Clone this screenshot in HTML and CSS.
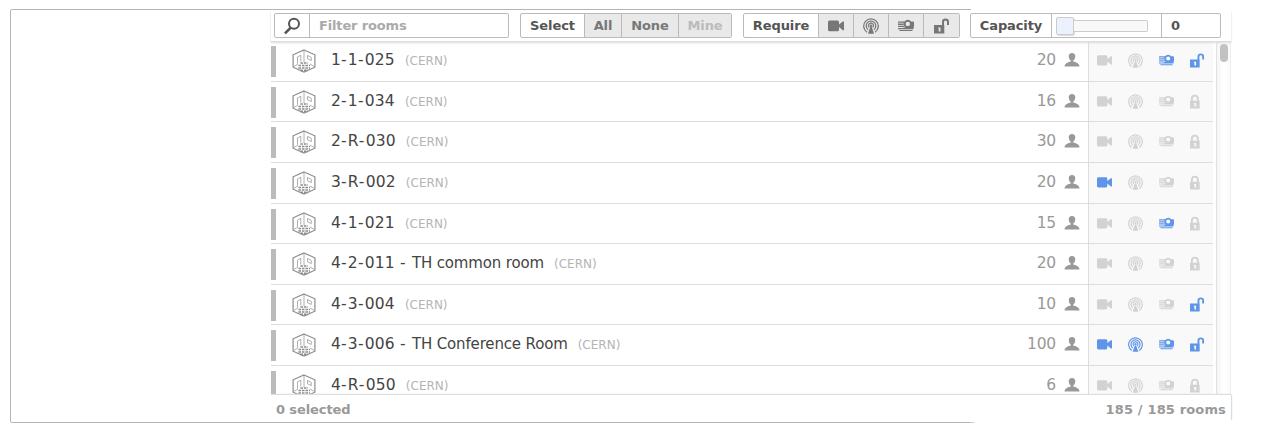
FILE: index.html
```html
<!DOCTYPE html>
<html lang="en">
<head>
<meta charset="utf-8">
<title>Rooms</title>
<link rel="stylesheet" href="styles.css">
</head>
<body>
<svg class="sprite" aria-hidden="true">
  <symbol id="room" viewBox="0 0 24 24"><g fill="none" stroke="currentColor"><path stroke-width="1.2" d="M12 1 22.9 5.8V18.2L12 23 1.1 18.2V5.8Z"/><path stroke-width=".7" d="M12 1V13M5.5 8 8.8 6.2V12.5M5.5 8V14.7M15.5 6.4 19.3 8.5V11.5L15.5 9.8ZM1.8 17.5 6 15M22.2 17.5 18 15"/><path stroke-width="1.7" stroke-dasharray="2.6 .9" d="M8.4 14H16M6.4 16.5H18M6.4 19H18M8.4 21.3H16"/></g></symbol>
  <symbol id="camera" viewBox="0 0 16 16"><path fill="currentColor" d="M1.5 2.5H9.5Q11 2.5 11 4V6.5L14.8 3.4H16V12.2H14.8L11 9.1V11.7Q11 13.2 9.5 13.2H1.5Q0 13.2 0 11.7V4Q0 2.5 1.5 2.5Z"/></symbol>
  <symbol id="cast" viewBox="0 0 16 16"><g fill="none" stroke="currentColor" stroke-width="1.25"><path d="M4 14.3A7.3 7.3 0 1 1 12 14.3M5 11.7A4.8 4.8 0 1 1 11 11.7M6.3 9.4A2.5 2.5 0 1 1 9.7 9.4"/></g><circle cx="8" cy="7.7" r="1.2" fill="currentColor"/><path fill="currentColor" d="M7.2 9H8.8L11 15.8H5Z"/></symbol>
  <symbol id="projector" viewBox="0 0 16 16"><path fill="currentColor" d="M0 3.4H6V4.7H0ZM0 5.6H5.6V6.9H0ZM0 7.8H6V9.1H0ZM0 10H15.5V11.3H0ZM1.5 12H14.5V13H1.5Z"/><path fill="currentColor" fill-rule="evenodd" d="M5.5 3.4H6.5Q7.6 1.8 9.8 1.8T13 3.4H15Q16 3.4 16 4.4V8.6Q16 10.6 14 10.6H5.5V9.4H7Q5 7.5 5.5 3.4ZM9.8 3.7A2.2 2.2 0 1 0 9.8 8.1 2.2 2.2 0 1 0 9.8 3.7Z"/></symbol>
  <symbol id="unlocked" viewBox="0 0 16 16"><path fill="currentColor" fill-rule="evenodd" d="M0 7H8V3.8Q8 .5 11.5 .5T15 3.8V7H13V4Q13 2.5 11.5 2.5T10 4V7H10.3V15.5H0ZM4.2 9.4V10.6H4.7V13.4H6.5V9.4Z"/></symbol>
  <symbol id="locked" viewBox="0 0 16 16"><path fill="currentColor" fill-rule="evenodd" d="M0 7.2H1V5Q1 .8 5.2 .8T9.4 5V7.2H10.3V15.5H0ZM3 7.2H7.4V5Q7.4 2.7 5.2 2.7T3 5ZM4.2 9.6V10.8H4.7V13.4H6.5V9.6Z"/></symbol>
  <symbol id="person" viewBox="0 0 16 15"><path fill="currentColor" d="M8 0Q11.3 0 11.3 3.6 11.3 6 9.2 7.8V8.6Q15.5 10 15.5 13.4H.5Q.5 10 6.8 8.6V7.8Q4.7 6 4.7 3.6 4.7 0 8 0Z"/></symbol>
</svg>
<div class="dialog">
  <div class="content">
    <header class="toolbar">
      <div class="group search">
        <span class="cell glass"><svg viewBox="0 0 18 18"><circle cx="11" cy="6.8" r="5" fill="none" stroke="#555" stroke-width="2"/><path d="M7.5 10.8 2 16.4" stroke="#555" stroke-width="2.6"/></svg></span>
        <span class="cell placeholder">Filter rooms</span>
      </div>
      <div class="group select">
        <span class="cell label">Select</span>
        <span class="cell button all">All</span>
        <span class="cell button none">None</span>
        <span class="cell button mine">Mine</span>
      </div>
      <div class="group require">
        <span class="cell label">Require</span>
        <span class="cell button tool"><svg><use href="#camera"/></svg></span>
        <span class="cell button tool"><svg><use href="#cast"/></svg></span>
        <span class="cell button tool"><svg><use href="#projector"/></svg></span>
        <span class="cell button tool last"><svg><use href="#unlocked"/></svg></span>
      </div>
      <div class="group capacity">
        <span class="cell label">Capacity</span>
        <span class="cell slider"><span class="handle"></span><span class="rail"></span></span>
        <span class="cell value">0</span>
      </div>
    </header>
    <main class="viewport">
      <div class="rooms" id="rooms"></div>
      <div class="scrollbar"><div class="thumb"></div></div>
    </main>
    <footer class="summary"><span class="chosen">0 selected</span><span class="total">185 / 185 rooms</span></footer>
  </div>
</div>
<script src="rooms.js"></script>
</body>
</html>
```
FILE: styles.css
```css
body { margin: 0; padding: 9px 0 0 10px; background: #fff; font-family: Verdana, "DejaVu Sans", sans-serif; overflow: hidden; }
.sprite { display: none; }
.dialog { box-sizing: border-box; width: 962px; height: 414px; padding-left: 260px; border: 1px solid #b5b5b5; border-radius: 2px; box-shadow: 2px 2px 2px #c4c4c4; }
.content { width: 960px; height: 412px; display: flex; flex-direction: column; background: #fff; }
.toolbar { box-sizing: border-box; height: 31px; flex: none; display: flex; padding: 3px 0 0 3px; z-index: 1; background: #fff; box-shadow: 0 1px 1px #ddd, 0 2px 2px #ddd; font: bold 13px "DejaVu Sans", sans-serif; letter-spacing: -.1px; color: #555; }
.group { box-sizing: border-box; height: 25px; display: flex; border: 1px solid #bbb; border-radius: 2px; overflow: hidden; }
.cell { box-sizing: border-box; display: flex; align-items: center; justify-content: center; }
.cell + .cell { border-left: 1px solid #bbb; }
.search { width: 235px; margin-right: 11px; }
.glass { width: 34px; }
.glass svg { width: 18px; height: 18px; }
.placeholder { flex: 1; justify-content: flex-start; padding-left: 9px; letter-spacing: -.15px; color: #aaa; }
.select { width: 212px; margin-right: 11px; }
.select .label { width: 63px; }
.button { background: #e9e9e9; color: #777; }
.all { width: 37px; }
.none { width: 57px; }
.mine { width: 53px; color: #bbb; }
.require { width: 217px; margin-right: 10px; }
.require .label { width: 74px; }
.tool { width: 35px; }
.tool.last { width: 36px; }
.tool svg { width: 16px; height: 16px; }
.capacity { width: 251px; }
.capacity .label { width: 80px; }
.slider { width: 110px; justify-content: flex-start; padding-left: 4px; }
.handle { box-sizing: border-box; width: 18px; height: 18px; border: 1px solid #ccc; border-radius: 2px; background: #ebf2fd; box-shadow: 1px 1px 1px #ddd; }
.rail { box-sizing: border-box; width: 74px; height: 12px; border: 1px solid #ccc; border-left: 0; border-radius: 0 2px 2px 0; background: #f9f9f9; }
.value { flex: 1; justify-content: flex-start; padding-left: 9px; }
.viewport { height: 354px; flex: none; display: flex; overflow: hidden; }
.rooms { width: 942px; flex: none; }
.room { height: 41px; display: flex; }
.room.compact { height: 40px; }
.info { box-sizing: border-box; width: 817px; display: flex; align-items: flex-start; border-bottom: 1px solid #ddd; }
.stripe { width: 5px; height: 31px; margin-top: 5px; background: #bbb; }
.cube { width: 24px; height: 24px; margin: 8px 0 0 15.5px; color: #8c8c8c; }
.name { margin: 9px 0 0 15.5px; font-size: 15px; line-height: 20px; letter-spacing: -.15px; color: #444; white-space: pre; }
.code { font-size: 15.5px; letter-spacing: .2px; }
.name i { font-style: normal; letter-spacing: 1.2px; }
.site { margin: 12px 0 0 10px; font-size: 12px; line-height: 16px; color: #b4b4b4; }
.seats { margin: 9px 8px 0 auto; font-size: 15.5px; line-height: 20px; letter-spacing: -.2px; color: #999; }
.person { width: 16px; height: 15px; margin: 12px 8px 0 0; color: #999; }
.equipment { box-sizing: border-box; width: 125px; display: flex; gap: 16px; padding: 12px 0 0 8px; background: #f9f9f9; border-left: 1px solid #ddd; border-bottom: 1px solid #ddd; }
.equipment svg { width: 15px; height: 15px; color: #d2d2d2; }
.equipment .on { color: #5e95e9; }
.scrollbar { box-sizing: border-box; width: 15px; margin-left: 3px; padding: 3px 0 0 3px; border-left: 1px solid #e2e2e2; border-right: 1px solid #eee; background: linear-gradient(to right, #f5f5f5, #fff 50%, #fafafa); }
.thumb { width: 8px; height: 18px; border-radius: 4px; background: #c2c2c2; }
.summary { box-sizing: border-box; height: 27px; z-index: 1; display: flex; align-items: flex-start; justify-content: space-between; padding: 7px 5px 0; background: #fff; box-shadow: 0 -1px 1px #ddd, 1px 0 1px #ddd; clip-path: inset(-3px -3px 2px 0); font: bold 13px "DejaVu Sans", sans-serif; line-height: 16px; color: #999; }
.chosen { letter-spacing: -.1px; }
.total { letter-spacing: .15px; }
```
FILE: rooms.js
```js
const rooms = [
  ["1-1-025", "", 20, [0, 0, 1, 1]],
  ["2-1-034", "", 16, [0, 0, 0, 0]],
  ["2-R-030", "", 30, [0, 0, 0, 0]],
  ["3-R-002", "", 20, [1, 0, 0, 0]],
  ["4-1-021", "", 15, [0, 0, 1, 0]],
  ["4-2-011 - ", "TH common room", 20, [0, 0, 0, 0]],
  ["4-3-004", "", 10, [0, 0, 0, 1]],
  ["4-3-006 - ", "TH Conference Room", 100, [1, 1, 1, 1]],
  ["4-R-050", "", 6, [0, 0, 0, 0]]
];
const compactRows = [1, 4, 6];
const icon = (id, on) => `<svg class="${on ? "on" : ""}"><use href="#${id}"/></svg>`;
document.getElementById("rooms").innerHTML = rooms.map(([code, title, seats, has], i) => `
  <div class="room ${compactRows.includes(i) ? "compact" : ""}">
    <div class="info">
      <span class="stripe"></span><svg class="cube"><use href="#room"/></svg>
      <span class="name"><span class="code">${code.replace(/-/g, "<i>-</i>")}</span>${title}</span><span class="site">(CERN)</span>
      <span class="seats">${seats}</span><svg class="person"><use href="#person"/></svg>
    </div>
    <div class="equipment">${icon("camera", has[0])}${icon("cast", has[1])}${icon("projector", has[2])}${icon(has[3] ? "unlocked" : "locked", has[3])}</div>
  </div>`).join("");
```
